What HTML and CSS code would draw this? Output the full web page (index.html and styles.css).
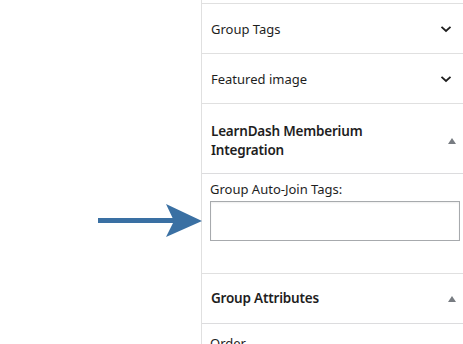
FILE: index.html
```html
<!DOCTYPE html>
<html lang="en">
<head>
    <meta charset="UTF-8">
    <meta name="viewport" content="width=device-width, initial-scale=1.0">
    <title>Group Settings</title>
    <link rel="stylesheet" href="styles.css">
</head>
<body>
    <div class="page">
        <div class="canvas">
            <svg class="pointer" width="106" height="34" viewBox="0 0 106 34">
                <rect x="0" y="14" width="76" height="5" fill="#3a70a3"/>
                <path d="M68 0 L104 17 L68 33 L76 17 Z" fill="#3a70a3"/>
            </svg>
        </div>

        <div class="sidebar">
            <div class="panel">
                <div class="panel-head">
                    <span>Group Tags</span>
                    <svg class="chevron" width="12" height="8" viewBox="0 0 12 8"><path d="M1.5 1.8 L6 6 L10.5 1.8" fill="none" stroke="#1e1e1e" stroke-width="1.8"/></svg>
                </div>
            </div>
            <div class="panel">
                <div class="panel-head">
                    <span>Featured image</span>
                    <svg class="chevron" width="12" height="8" viewBox="0 0 12 8"><path d="M1.5 1.8 L6 6 L10.5 1.8" fill="none" stroke="#1e1e1e" stroke-width="1.8"/></svg>
                </div>
            </div>
            <div class="panel">
                <div class="box-head tall">
                    <h2>LearnDash Memberium<br>Integration</h2>
                    <span class="toggle"></span>
                </div>
                <div class="box-body">
                    <label for="autoJoin">Group Auto-Join Tags:</label>
                    <input type="text" id="autoJoin">
                </div>
            </div>
            <div class="panel">
                <div class="box-head">
                    <h2>Group Attributes</h2>
                    <span class="toggle"></span>
                </div>
                <div class="box-body">
                    <p class="field-name">Order</p>
                </div>
            </div>
        </div>
    </div>
</body>
</html>
```

FILE: styles.css
```css
body {
    margin: 0;
    padding: 0;
    background-color: white;
    font-family: "Noto Sans", "Open Sans", sans-serif;
    color: #1e1e1e;
    overflow: hidden;
}

.page {
    display: flex;
    height: 344px;
}

.canvas {
    width: 201px;
    flex-shrink: 0;
    position: relative;
}

.pointer {
    position: absolute;
    left: 98px;
    top: 204px;
}

.sidebar {
    flex: 1;
    border-left: 1px solid #e0e0e0;
    padding-top: 3px;
}

.panel {
    border-top: 1px solid #e0e0e0;
}

.panel-head {
    height: 49px;
    display: flex;
    align-items: center;
    justify-content: space-between;
    padding: 0 11px 0 9px;
    font-size: 13px;
}

.chevron {
    display: block;
}

.box-head {
    height: 50px;
    box-sizing: border-box;
    display: flex;
    align-items: center;
    justify-content: space-between;
    padding: 0 7px 0 9px;
    border-bottom: 1px solid #dcdcde;
}

.box-head.tall {
    height: 70px;
    padding-top: 4px;
}

.box-head h2 {
    margin: 0;
    font-size: 13.5px;
    font-weight: 600;
    letter-spacing: -0.2px;
    line-height: 19px;
}

.toggle {
    width: 0;
    height: 0;
    border-left: 4px solid transparent;
    border-right: 4px solid transparent;
    border-bottom: 6px solid #787c82;
}

.box-body {
    padding: 5px 3px 0 8px;
    font-size: 13px;
}

.box-body label {
    display: block;
    line-height: 20px;
}

.box-body input {
    display: block;
    box-sizing: border-box;
    width: 100%;
    height: 40px;
    margin: 2px 0 32px;
    border: 1px solid #a7aaad;
    border-radius: 0;
    box-shadow: inset 0 1px 2px rgba(0, 0, 0, 0.07);
}

.field-name {
    margin: 5px 0 0;
}
```
